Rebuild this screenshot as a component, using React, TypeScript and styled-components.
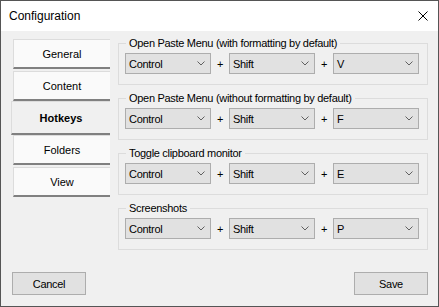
import React from 'react';
import styled, { createGlobalStyle } from 'styled-components';

const GlobalStyle = createGlobalStyle`
  html, body {
    margin: 0;
    padding: 0;
    background: #ffffff;
  }
  * {
    box-sizing: border-box;
  }
`;

const Window = styled.div`
  width: 439px;
  height: 307px;
  border: 1px solid #555555;
  background: #f0f0f0;
  display: flex;
  flex-direction: column;
  font-family: 'Liberation Sans', Arial, sans-serif;
  color: #000000;
`;

const TitleBar = styled.div`
  height: 30px;
  background: #ffffff;
  display: flex;
  align-items: center;
  justify-content: space-between;
  padding: 0 10px 0 8px;
`;

const Title = styled.span`
  font-size: 12px;
`;

const CloseButton = styled.div`
  width: 10px;
  height: 10px;
  display: flex;
`;

const Body = styled.div`
  flex: 1;
  display: flex;
  flex-direction: column;
  padding: 0 10px 11px 11px;
  font-size: 11px;
  letter-spacing: -0.3px;
`;

const Main = styled.div`
  display: flex;
  align-items: flex-start;
  gap: 8px;
`;

const TabList = styled.div`
  width: 97px;
  margin: 8px 0 0 1px;
  display: flex;
  flex-direction: column;
  gap: 2px;
`;

const Tab = styled.div<{ $active?: boolean }>`
  height: ${({ $active }) => ($active ? '34px' : '30px')};
  margin: ${({ $active }) => ($active ? '-2px 0 -2px -2px' : '0')};
  background: ${({ $active }) => ($active ? '#f0f0f0' : '#fafafa')};
  border-top: 1px solid #dcdcdc;
  border-left: 1px solid #dcdcdc;
  border-bottom: 2px solid #808080;
  display: flex;
  align-items: center;
  justify-content: center;
  letter-spacing: 0;
  font-weight: ${({ $active }) => ($active ? 'bold' : 'normal')};
`;

const Groups = styled.div`
  width: 310px;
  margin-top: 6px;
  display: flex;
  flex-direction: column;
  gap: 7px;
`;

const Group = styled.fieldset`
  margin: 0;
  padding: 3px 8px 10px 6px;
  border: 1px solid #dcdcdc;
  min-width: 0;
`;

const Legend = styled.legend`
  font-size: 11px;
  line-height: 13px;
  padding: 0 3px;
  margin-left: 1px;
`;

const KeyRow = styled.div`
  display: flex;
  align-items: center;
`;

const Combo = styled.div`
  width: 86px;
  height: 21px;
  background: #e1e1e1;
  border: 1px solid #adadad;
  display: flex;
  align-items: center;
  justify-content: space-between;
  padding: 0 5px 0 3px;
`;

const Plus = styled.span`
  width: 18px;
  text-align: center;
`;

const Footer = styled.div`
  margin-top: auto;
  display: flex;
  justify-content: space-between;
`;

const Button = styled.div`
  width: 74px;
  height: 23px;
  background: #e1e1e1;
  border: 1px solid #adadad;
  display: flex;
  align-items: center;
  justify-content: center;
`;

const Chevron = () => (
  <svg width="8" height="5" viewBox="0 0 8 5">
    <polyline points="0.5,0.5 4,4 7.5,0.5" fill="none" stroke="#606060" strokeWidth="1" />
  </svg>
);

const hotkeys = [
  { title: 'Open Paste Menu (with formatting by default)', key: 'V' },
  { title: 'Open Paste Menu (without formatting by default)', key: 'F' },
  { title: 'Toggle clipboard monitor', key: 'E' },
  { title: 'Screenshots', key: 'P' },
];

const tabs = ['General', 'Content', 'Hotkeys', 'Folders', 'View'];

export default function App() {
  return (
    <>
      <GlobalStyle />
      <Window>
        <TitleBar>
          <Title>Configuration</Title>
          <CloseButton>
            <svg width="10" height="10" viewBox="0 0 10 10">
              <path d="M0.5 0.5 L9.5 9.5 M9.5 0.5 L0.5 9.5" stroke="#000" strokeWidth="1" />
            </svg>
          </CloseButton>
        </TitleBar>
        <Body>
          <Main>
            <TabList>
              {tabs.map((t) => (
                <Tab key={t} $active={t === 'Hotkeys'}>
                  {t}
                </Tab>
              ))}
            </TabList>
            <Groups>
              {hotkeys.map((h) => (
                <Group key={h.title}>
                  <Legend>{h.title}</Legend>
                  <KeyRow>
                    <Combo>
                      <span>Control</span>
                      <Chevron />
                    </Combo>
                    <Plus>+</Plus>
                    <Combo>
                      <span>Shift</span>
                      <Chevron />
                    </Combo>
                    <Plus>+</Plus>
                    <Combo>
                      <span>{h.key}</span>
                      <Chevron />
                    </Combo>
                  </KeyRow>
                </Group>
              ))}
            </Groups>
          </Main>
          <Footer>
            <Button>Cancel</Button>
            <Button>Save</Button>
          </Footer>
        </Body>
      </Window>
    </>
  );
}
